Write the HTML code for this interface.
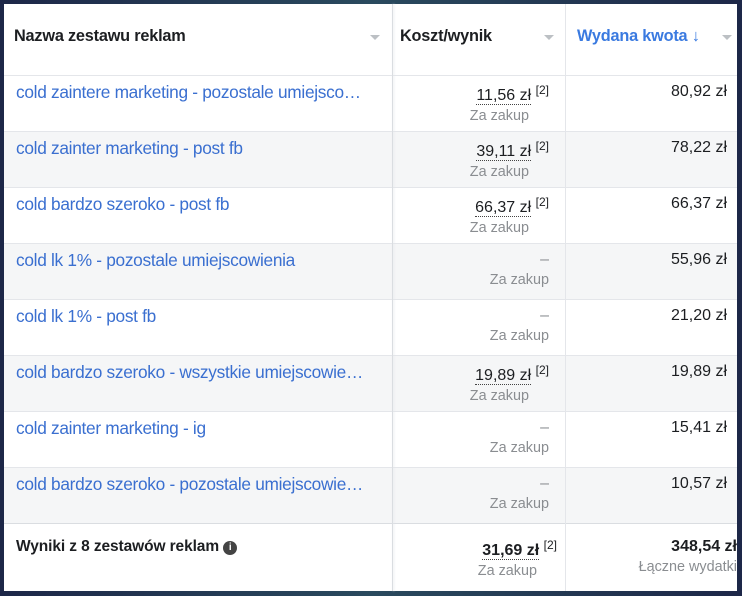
<!DOCTYPE html><html><head><meta charset="utf-8"><style>
body{margin:0;width:742px;height:596px;background:linear-gradient(90deg,#1d2748,#2a4a5e 50%,#1d2748);font-family:"Liberation Sans",sans-serif;overflow:hidden;position:relative}
.t{position:absolute;left:4px;top:4px;width:733px;height:587px;background:#fff}
.row{position:absolute;left:0;width:733px;height:56px;border-top:1px solid #e4e6ea}
.g{background:#f5f6f7}
.c1{position:absolute;left:12px;top:6px;width:352px;font-size:17.3px;color:#3a6fd0;white-space:nowrap;overflow:hidden;text-overflow:ellipsis;letter-spacing:-0.3px}
.c2{position:absolute;right:188px;top:7px;text-align:right;font-size:16px;color:#1c1e21}
.c3{position:absolute;right:10px;top:7px;text-align:right;font-size:16px;color:#1c1e21}
.sub{font-size:14.4px;color:#8a8d91;margin-top:3px}
.d{border-bottom:1px dotted #444}
.m{color:#8a8d91;font-weight:normal}
sup{font-size:12px}
.v1{position:absolute;left:388px;top:0;width:1px;height:587px;background:#dadde1;box-shadow:1px 0 2px #e4e6ea}
.v2{position:absolute;left:561px;top:0;width:1px;height:587px;background:#e4e6ea}
.h{position:absolute;top:23px;font-size:16.3px;font-weight:bold;color:#1c1e21;letter-spacing:-0.2px}
.ar{position:absolute;top:31px;width:0;height:0;border-left:5px solid transparent;border-right:5px solid transparent;border-top:5px solid #bcc0c4}
</style></head><body><div class="t">
<div class="h" style="left:10px">Nazwa zestawu reklam</div><div class="ar" style="left:366px"></div>
<div class="h" style="left:396px">Koszt/wynik</div><div class="ar" style="left:540px"></div>
<div class="h" style="left:573px;color:#3a7ae0">Wydana kwota ↓</div><div class="ar" style="left:718px"></div>

<div class="row" style="top:71px"><div class="c1">cold zaintere marketing - pozostale umiejscowienia</div><div class="c2"><span class="d">11,56 zł</span> <sup>[2]</sup><div class="sub" style="margin-right:20px">Za zakup</div></div><div class="c3">80,92 zł</div></div>
<div class="row g" style="top:127px"><div class="c1">cold zainter marketing - post fb</div><div class="c2"><span class="d">39,11 zł</span> <sup>[2]</sup><div class="sub" style="margin-right:20px">Za zakup</div></div><div class="c3">78,22 zł</div></div>
<div class="row" style="top:183px"><div class="c1">cold bardzo szeroko - post fb</div><div class="c2"><span class="d">66,37 zł</span> <sup>[2]</sup><div class="sub" style="margin-right:20px">Za zakup</div></div><div class="c3">66,37 zł</div></div>
<div class="row g" style="top:239px"><div class="c1">cold lk 1% - pozostale umiejscowienia</div><div class="c2"><span class="m">–</span><div class="sub">Za zakup</div></div><div class="c3">55,96 zł</div></div>
<div class="row" style="top:295px"><div class="c1">cold lk 1% - post fb</div><div class="c2"><span class="m">–</span><div class="sub">Za zakup</div></div><div class="c3">21,20 zł</div></div>
<div class="row g" style="top:351px"><div class="c1">cold bardzo szeroko - wszystkie umiejscowienia</div><div class="c2"><span class="d">19,89 zł</span> <sup>[2]</sup><div class="sub" style="margin-right:20px">Za zakup</div></div><div class="c3">19,89 zł</div></div>
<div class="row" style="top:407px"><div class="c1">cold zainter marketing - ig</div><div class="c2"><span class="m">–</span><div class="sub">Za zakup</div></div><div class="c3">15,41 zł</div></div>
<div class="row g" style="top:463px"><div class="c1">cold bardzo szeroko - pozostale umiejscowienia</div><div class="c2"><span class="m">–</span><div class="sub">Za zakup</div></div><div class="c3">10,57 zł</div></div>
<div class="row" style="top:519px;height:68px;border-top:1px solid #dadde1"><div class="c1" style="color:#1c1e21;font-weight:bold;font-size:15.5px;top:14px;letter-spacing:-0.1px">Wyniki z 8 zestawów reklam <span style="display:inline-block;width:14px;height:14px;border-radius:50%;background:#444;color:#fff;font-size:10px;text-align:center;line-height:14px;vertical-align:1px">i</span></div>
<div class="c2" style="top:14px;font-weight:bold;right:180px"><span class="d">31,69 zł</span> <sup style="font-weight:normal">[2]</sup><div class="sub" style="font-weight:normal;margin-right:20px">Za zakup</div></div>
<div class="c3" style="top:14px;font-weight:bold;right:0px">348,54 zł<div class="sub" style="font-weight:normal">Łączne wydatki</div></div></div>
<div class="v1"></div><div class="v2"></div>
</div></body></html>
